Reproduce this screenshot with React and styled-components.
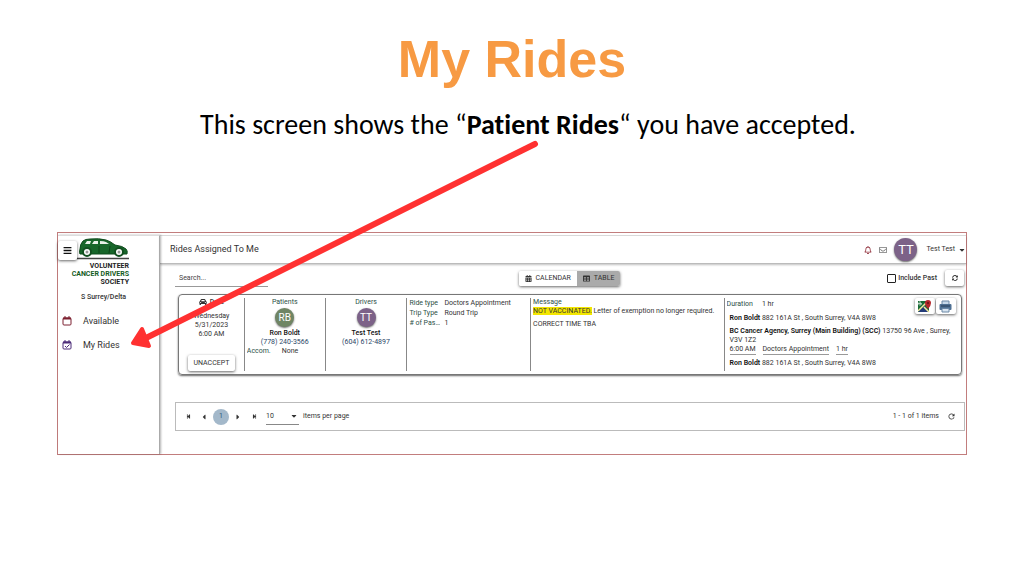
import React, { useState } from 'react';
import styled, { createGlobalStyle, css } from 'styled-components';
import {
  FaBars,
  FaCalendarAlt,
  FaCaretDown,
  FaCarAlt,
  FaRegBell,
  FaRegEnvelope,
  FaStepBackward,
  FaStepForward,
  FaCaretLeft,
  FaCaretRight,
  FaSyncAlt,
  FaTable,
} from 'react-icons/fa';
import { MdRefresh } from 'react-icons/md';

const colors = {
  title: '#f79a43',
  arrow: '#ff3131',
  frame: '#c27d7d',
  text: '#333',
  label: '#2c5147',
  link: '#2b4668',
  line: '#888',
};

const FONT = "Roboto, 'Liberation Sans', sans-serif";

const GlobalStyle = createGlobalStyle`
  * {
    box-sizing: border-box;
  }

  body {
    margin: 0;
    background: #fff;
  }

  button,
  input,
  select {
    margin: 0;
    font: inherit;
    color: inherit;
  }

  svg {
    display: block;
    flex: none;
  }
`;

const raised = css`
  border: 0;
  border-radius: 2px;
  background: #fff;
  box-shadow: 0 1px 3px rgba(0, 0, 0, 0.6);
`;

const Slide = styled.main`
  position: relative;
  padding: 27px 57px 40px;
`;

const Title = styled.h1`
  margin: 0;
  font: bold 52px/64px 'Liberation Sans', Arial, sans-serif;
  color: ${colors.title};
  text-align: center;
`;

const Subtitle = styled.p`
  margin: 18px 0 0;
  padding-left: 32px;
  font: 28px/32px Carlito, Lato, sans-serif;
  font-variant-ligatures: none;
  color: #000;
  text-align: center;
`;

const ArrowSvg = styled.svg`
  position: absolute;
  top: 138px;
  left: 126px;
  pointer-events: none;
`;

const Frame = styled.section`
  display: grid;
  grid-template-columns: 102px 1fr;
  margin-top: 91px;
  border: 1px solid ${colors.frame};
  font: 7px/9px ${FONT};
  color: ${colors.text};
`;

const Sidebar = styled.aside`
  position: relative;
  margin-top: 2px;
  padding-top: 1px;
  border-top: 1px solid #ddd;
  border-right: 1px solid #aaa;
  box-shadow: 1px 0 2px rgba(0, 0, 0, 0.3);
`;

const MenuButton = styled.button`
  ${raised};
  position: absolute;
  top: 5px;
  left: 0;
  display: grid;
  place-items: center;
  width: 19px;
  height: 19px;
  padding: 0;
  color: #111;
`;

const Brand = styled.div`
  display: flex;
  flex-direction: column;
  align-items: flex-end;
  padding-right: 30px;
  font: bold 7px/8px 'Liberation Sans Narrow', Roboto, sans-serif;
  color: #222;
  white-space: nowrap;

  svg {
    margin-bottom: 2px;
  }

  em {
    font-style: normal;
    color: #155c23;
  }
`;

const Region = styled.p`
  margin: 7px 0;
  padding-right: 10px;
  font-size: 7px;
  font-weight: 500;
  text-align: center;
`;

const NavLink = styled.a`
  display: flex;
  align-items: center;
  gap: 11px;
  height: 24px;
  padding-left: 4px;
  font-size: 9px;
  color: ${colors.text};
  text-decoration: none;

  svg {
    color: ${props => props.$tint};
  }
`;

const Content = styled.div`
  margin-top: 2px;
  border-top: 1px solid #ddd;
  min-width: 0;
`;

const Header = styled.header`
  display: flex;
  align-items: center;
  gap: 7px;
  height: 28px;
  padding: 0 0 0 10px;
  border-bottom: 1px solid #bbb;
  box-shadow: 0 1px 2px rgba(0, 0, 0, 0.25);
`;

const Heading = styled.h2`
  margin: 0 auto 0 0;
  font-size: 9px;
  font-weight: 400;
`;

const Avatar = styled.span`
  display: grid;
  place-items: center;
  width: ${props => props.$size}px;
  height: ${props => props.$size}px;
  border-radius: 50%;
  background: ${props => props.$color};
  box-shadow: 0 1px 2px rgba(0, 0, 0, 0.6);
  font-size: ${props => (props.$size > 20 ? 13 : 10)}px;
  color: #fff;
`;

const UserButton = styled.button`
  display: flex;
  align-items: center;
  gap: 3px;
  padding: 0 0 0 2px;
  border: 0;
  background: none;
`;

const IconButton = styled.button`
  display: grid;
  place-items: center;
  padding: 0;
  border: 0;
  background: none;
  color: ${props => props.$color || '#333'};
`;

const Toolbar = styled.div`
  display: grid;
  grid-template-columns: 1fr auto 1fr;
  align-items: center;
  height: 28px;
  padding: 0 2px 0 15px;
`;

const Search = styled.input`
  width: 93px;
  height: 17px;
  padding: 0 4px;
  border: 0;
  border-bottom: 1px solid #999;
  background: none;
  outline: 0;

  &::placeholder {
    color: #444;
    opacity: 1;
  }
`;

const Toggle = styled.div`
  ${raised};
  display: flex;
  overflow: hidden;
`;

const ToggleButton = styled.button`
  display: flex;
  align-items: center;
  gap: 4px;
  height: 15px;
  padding: 0 6px;
  border: 0;
  background: ${props => (props.$active ? '#aaa' : '#fff')};
`;

const ToolbarEnd = styled.div`
  display: flex;
  justify-content: flex-end;
  align-items: center;
  gap: 8px;
`;

const CheckLabel = styled.label`
  display: flex;
  align-items: center;
  gap: 2px;
  font-weight: 500;
`;

const Checkbox = styled.input`
  appearance: none;
  width: 9px;
  height: 9px;
  border: 1px solid #222;
  border-radius: 1px;

  &:checked {
    background: #333;
  }
`;

const RaisedButton = styled.button`
  ${raised};
  display: grid;
  place-items: center;
  width: ${props => props.$width}px;
  height: 16px;
  padding: 0;
`;

const Card = styled.article`
  display: grid;
  grid-template-columns: 65fr 81fr 82fr 124fr 194fr 238fr;
  min-height: 81px;
  margin: 2px 4px 0 18px;
  padding: 3px 0;
  border: 1px solid #777;
  border-radius: 4px;
  box-shadow: 0 1px 2px rgba(0, 0, 0, 0.6);
`;

const Cell = styled.div`
  min-width: 0;
  padding: 0 0 0 2px;

  & + & {
    border-left: 1px solid ${colors.line};
  }
`;

const CenterCell = styled(Cell)`
  display: flex;
  flex-direction: column;
  align-items: center;
  padding: 0;
`;

const Label = styled.span`
  overflow: hidden;
  color: ${colors.label};
  text-overflow: ellipsis;
  white-space: nowrap;
`;

const DateHead = styled.strong`
  display: flex;
  gap: 3px;
  margin-bottom: 5px;
  font-weight: 500;
`;

const Push = styled.div`
  margin-top: auto;
`;

const PersonAvatar = styled(Avatar)`
  margin: 1px 0 2px;
`;

const Name = styled.strong`
  font-weight: 500;
  color: #111;
`;

const Phone = styled.a`
  color: ${colors.link};
  text-decoration: none;
`;

const Accom = styled.div`
  display: flex;
  gap: 11px;
  align-self: flex-start;
  padding-left: 2px;
`;

const Facts = styled.dl`
  display: grid;
  grid-template-columns: 31px 1fr;
  column-gap: 4px;
  margin: 0;
  line-height: 10px;

  dd {
    margin: 0;
  }
`;

const Message = styled.p`
  margin: 0 0 4px;

  mark {
    background: #f3e600;
    color: inherit;
  }
`;

const TripCell = styled(Cell)`
  position: relative;
`;

const TripActions = styled.div`
  position: absolute;
  top: 0;
  right: 5px;
  display: flex;
  gap: 1px;
`;

const Duration = styled.div`
  display: flex;
  gap: 9px;
  margin: 2px 0 5px;
`;

const Stop = styled.div`
  margin: 0 8px 4px 3px;

  &:last-of-type {
    margin-bottom: 0;
  }

  b {
    font-weight: 600;
    color: #111;
  }
`;

const StopFacts = styled.div`
  display: flex;
  gap: 7px;

  span {
    border-bottom: 1px solid #999;
  }
`;

const Route = styled.div`
  display: block;
`;

const Pager = styled.nav`
  display: flex;
  align-items: center;
  height: 29px;
  margin: 27px 1px 23px 15px;
  padding: 0 8px;
  border: 1px solid #bbb;
`;

const PagerButtons = styled.div`
  display: flex;
  align-items: center;
  gap: 8px;
  margin-right: 8px;

  button {
    width: 8px;
  }
`;

const PageNumber = styled.span`
  display: grid;
  place-items: center;
  width: 16px;
  height: 16px;
  margin: 0 -3px;
  border-radius: 50%;
  background: #a3b8ca;
  color: #2f5878;
`;

const PageSize = styled.label`
  display: flex;
  align-items: center;
  gap: 4px;
`;

const SelectBox = styled.span`
  position: relative;
  display: block;

  select {
    appearance: none;
    display: block;
    width: 33px;
    height: 17px;
    padding: 0;
    border: 0;
    border-bottom: 1px solid #888;
    border-radius: 0;
    background: none;
  }

  svg {
    position: absolute;
    top: 4px;
    right: 1px;
    pointer-events: none;
  }
`;

const PagerStatus = styled.span`
  margin: 0 8px 0 auto;
`;

const Arrow = () => (
  <ArrowSvg width={416} height={214} aria-hidden="true">
    <path
      d="M409 6L20 200"
      stroke={colors.arrow}
      strokeWidth={6}
      strokeLinecap="round"
    />
    <path
      d="M7 205L16 191L23 208Z"
      fill={colors.arrow}
      stroke={colors.arrow}
      strokeWidth={4}
      strokeLinejoin="round"
    />
  </ArrowSvg>
);

const CarLogo = () => (
  <svg width={52} height={23} viewBox="0 0 52 23" aria-hidden="true">
    <path
      d="M3 17Q2 16 3 12Q3 7 6 4Q8 2 13 2Q22 1 29 3Q33 4 38 8Q46 9 49 12Q51 14 50 17Z"
      fill="#17662a"
      stroke="#0f4a1d"
    />
    <path
      d="M8 7L10 4L14 4L13 7ZM15 7L17 4H21V7ZM23 7V4Q27 4 29 5L32 7Z"
      fill="#e8f0e8"
    />
    <path d="M22 9V16M33 9L32 16" stroke="#0c4219" fill="none" />
    {[10, 42].map(cx => (
      <g key={cx}>
        <circle cx={cx} cy={15} r={4} fill="#fff" stroke="#124f20" strokeWidth={2} />
        <circle cx={cx} cy={15} r={1.5} fill="#999" />
      </g>
    ))}
    <path d="M0 21.5H52" stroke="#444" strokeWidth={1.5} />
  </svg>
);

const CalendarIcon = ({ checked }) => (
  <svg
    width={10}
    height={10}
    viewBox="0 0 10 10"
    fill="none"
    stroke="currentColor"
    aria-hidden="true"
  >
    <rect x={1} y={2} width={8} height={7} rx={1} />
    <path d="M1 2.5H9" strokeWidth={2} />
    <path d="M3 0V2M7 0V2" />
    {checked && <path d="M3 6L4.5 7.5L7.5 4.5" />}
  </svg>
);

const MapIcon = () => (
  <svg width={13} height={13} viewBox="0 0 13 13" aria-hidden="true">
    <path d="M0 1H11V12H0Z" fill="#186b35" />
    <path d="M0 12L6 6L11 12Z" fill="#233b78" />
    <path d="M0 11L8 3M6 7L11 12" stroke="#f4e7a0" strokeWidth={1.5} />
    <path d="M1 3.5H3.5M3.5 3.5A1.5 1.5 0 1 1 3 2.4" stroke="#fff" fill="none" strokeWidth={0.7} />
    <path d="M10 9Q7 6 7 3A3 3 0 0 1 13 3Q13 6 10 9Z" fill="#b3262a" />
    <circle cx={10} cy={3} r={1} fill="#651015" />
  </svg>
);

const PrinterIcon = () => (
  <svg width={13} height={13} viewBox="0 0 13 13" aria-hidden="true">
    <path d="M3 1H10V5H3Z" fill="#c6d8e9" stroke="#6a87a5" />
    <rect x={0.5} y={4} width={12} height={6} rx={1} fill="#4e7093" />
    <path d="M2 6H11" stroke="#263d57" />
    <path d="M3 8.5H10V12H3Z" fill="#d8e5f1" stroke="#6a87a5" />
  </svg>
);

const Person = ({ label, initials, color, name, phone, children }) => (
  <CenterCell>
    <Label>{label}</Label>
    <PersonAvatar $size={19} $color={color}>
      {initials}
    </PersonAvatar>
    <Name>{name}</Name>
    <Phone href={`tel:${phone}`}>{phone}</Phone>
    {children}
  </CenterCell>
);

const RideCard = () => (
  <Card>
    <CenterCell>
      <DateHead>
        <FaCarAlt size={8} /> Date
      </DateHead>
      <span>Wednesday</span>
      <span>5/31/2023</span>
      <span>6:00 AM</span>
      <Push>
        <RaisedButton $width={47}>UNACCEPT</RaisedButton>
      </Push>
    </CenterCell>
    <Person
      label="Patients"
      initials="RB"
      color="#6f8564"
      name="Ron Boldt"
      phone="(778) 240-3566"
    >
      <Accom>
        <Label>Accom.</Label>
        <span>None</span>
      </Accom>
    </Person>
    <Person
      label="Drivers"
      initials="TT"
      color="#7c6288"
      name="Test Test"
      phone="(604) 612-4897"
    />
    <Cell>
      <Facts>
        <Label as="dt">Ride type</Label>
        <dd>Doctors Appointment</dd>
        <Label as="dt">Trip Type</Label>
        <dd>Round Trip</dd>
        <Label as="dt"># of Pas...</Label>
        <dd>1</dd>
      </Facts>
    </Cell>
    <Cell>
      <Label>Message</Label>
      <Message>
        <mark>NOT VACCINATED.</mark> Letter of exemption no longer required.
      </Message>
      <Message>CORRECT TIME TBA</Message>
    </Cell>
    <TripCell>
      <Duration>
        <Label>Duration</Label>
        <span>1 hr</span>
      </Duration>
      <Route>
        <Stop>
          <b>Ron Boldt</b> 882 161A St , South Surrey, V4A 8W8
        </Stop>
        <Stop>
          <b>BC Cancer Agency, Surrey (Main Building) (SCC)</b> 13750 96 Ave ,
          Surrey, V3V 1Z2
          <StopFacts>
            <span>6:00 AM</span>
            <span>Doctors Appointment</span>
            <span>1 hr</span>
          </StopFacts>
        </Stop>
        <Stop>
          <b>Ron Boldt</b> 882 161A St , South Surrey, V4A 8W8
        </Stop>
      </Route>
      <TripActions>
        <RaisedButton $width={20} aria-label="Open map">
          <MapIcon />
        </RaisedButton>
        <RaisedButton $width={20} aria-label="Print">
          <PrinterIcon />
        </RaisedButton>
      </TripActions>
    </TripCell>
  </Card>
);

const App = () => {
  const [view, setView] = useState('table');

  return (
    <>
      <GlobalStyle />
      <Slide>
        <Title>My Rides</Title>
        <Subtitle>
          This screen shows the “<b>Patient Rides</b>“ you have accepted.
        </Subtitle>
        <Frame>
          <Sidebar>
            <Brand>
              <CarLogo />
              <span>VOLUNTEER</span>
              <em>CANCER DRIVERS</em>
              <span>SOCIETY</span>
            </Brand>
            <MenuButton aria-label="Menu">
              <FaBars size={9} />
            </MenuButton>
            <Region>S Surrey/Delta</Region>
            <NavLink href="#available" $tint="#7d2030">
              <CalendarIcon />
              Available
            </NavLink>
            <NavLink href="#my-rides" $tint="#4d2c78">
              <CalendarIcon checked />
              My Rides
            </NavLink>
          </Sidebar>
          <Content>
            <Header>
              <Heading>Rides Assigned To Me</Heading>
              <IconButton $color="#8c2733" aria-label="Notifications">
                <FaRegBell size={8} />
              </IconButton>
              <IconButton $color="#777" aria-label="Messages">
                <FaRegEnvelope size={8} />
              </IconButton>
              <Avatar $size={23} $color="#7c6288">
                TT
              </Avatar>
              <UserButton>
                Test Test <FaCaretDown size={8} />
              </UserButton>
            </Header>
            <Toolbar>
              <Search placeholder="Search..." aria-label="Search" />
              <Toggle>
                <ToggleButton
                  $active={view === 'calendar'}
                  onClick={() => setView('calendar')}
                >
                  <FaCalendarAlt size={7} /> CALENDAR
                </ToggleButton>
                <ToggleButton
                  $active={view === 'table'}
                  onClick={() => setView('table')}
                >
                  <FaTable size={7} /> TABLE
                </ToggleButton>
              </Toggle>
              <ToolbarEnd>
                <CheckLabel>
                  <Checkbox type="checkbox" />
                  Include Past
                </CheckLabel>
                <RaisedButton $width={19} aria-label="Refresh">
                  <FaSyncAlt size={6} />
                </RaisedButton>
              </ToolbarEnd>
            </Toolbar>
            <RideCard />
            <Pager>
              <PagerButtons>
                <IconButton aria-label="First page">
                  <FaStepBackward size={5} />
                </IconButton>
                <IconButton aria-label="Previous page">
                  <FaCaretLeft size={8} />
                </IconButton>
                <PageNumber>1</PageNumber>
                <IconButton aria-label="Next page">
                  <FaCaretRight size={8} />
                </IconButton>
                <IconButton aria-label="Last page">
                  <FaStepForward size={5} />
                </IconButton>
              </PagerButtons>
              <PageSize>
                <SelectBox>
                  <select defaultValue="10">
                    <option>10</option>
                    <option>20</option>
                    <option>50</option>
                  </select>
                  <FaCaretDown size={8} />
                </SelectBox>
                items per page
              </PageSize>
              <PagerStatus>1 - 1 of 1 items</PagerStatus>
              <IconButton aria-label="Reload">
                <MdRefresh size={9} />
              </IconButton>
            </Pager>
          </Content>
        </Frame>
        <Arrow />
      </Slide>
    </>
  );
};

export default App;
